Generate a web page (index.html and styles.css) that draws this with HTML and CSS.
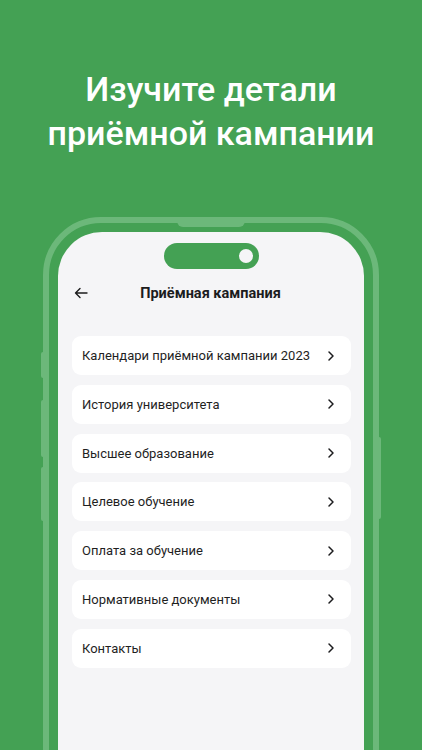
FILE: index.html
```html
<!DOCTYPE html>
<html lang="ru">
<head>
<meta charset="utf-8">
<title>Приёмная кампания</title>
<link rel="stylesheet" href="styles.css">
</head>
<body>
<div class="page">
  <h1 class="headline">Изучите детали<br>приёмной кампании</h1>
  <div class="phone">
    <span class="btn btn-l1"></span>
    <span class="btn btn-l2"></span>
    <span class="btn btn-l3"></span>
    <span class="btn btn-r1"></span>
    <span class="speaker"></span>
    <div class="screen">
      <div class="island"><span class="cam"></span></div>
      <div class="header">
        <svg class="back" width="14" height="12" viewBox="0 0 14 12"><path d="M13 6H1.5M6 1.5L1.5 6L6 10.5" fill="none" stroke="#1c1c1e" stroke-width="1.4" stroke-linecap="round" stroke-linejoin="round"/></svg>
        <div class="title">Приёмная кампания</div>
        <span class="spacer"></span>
      </div>
      <div class="list">
        <div class="item"><span>Календари приёмной кампании 2023</span><svg class="chev" width="8" height="12" viewBox="0 0 8 12"><path d="M2 2L6 6L2 10" fill="none" stroke="#1c1c1e" stroke-width="1.5" stroke-linecap="round" stroke-linejoin="round"/></svg></div>
        <div class="item"><span>История университета</span><svg class="chev" width="8" height="12" viewBox="0 0 8 12"><path d="M2 2L6 6L2 10" fill="none" stroke="#1c1c1e" stroke-width="1.5" stroke-linecap="round" stroke-linejoin="round"/></svg></div>
        <div class="item"><span>Высшее образование</span><svg class="chev" width="8" height="12" viewBox="0 0 8 12"><path d="M2 2L6 6L2 10" fill="none" stroke="#1c1c1e" stroke-width="1.5" stroke-linecap="round" stroke-linejoin="round"/></svg></div>
        <div class="item"><span>Целевое обучение</span><svg class="chev" width="8" height="12" viewBox="0 0 8 12"><path d="M2 2L6 6L2 10" fill="none" stroke="#1c1c1e" stroke-width="1.5" stroke-linecap="round" stroke-linejoin="round"/></svg></div>
        <div class="item"><span>Оплата за обучение</span><svg class="chev" width="8" height="12" viewBox="0 0 8 12"><path d="M2 2L6 6L2 10" fill="none" stroke="#1c1c1e" stroke-width="1.5" stroke-linecap="round" stroke-linejoin="round"/></svg></div>
        <div class="item"><span>Нормативные документы</span><svg class="chev" width="8" height="12" viewBox="0 0 8 12"><path d="M2 2L6 6L2 10" fill="none" stroke="#1c1c1e" stroke-width="1.5" stroke-linecap="round" stroke-linejoin="round"/></svg></div>
        <div class="item"><span>Контакты</span><svg class="chev" width="8" height="12" viewBox="0 0 8 12"><path d="M2 2L6 6L2 10" fill="none" stroke="#1c1c1e" stroke-width="1.5" stroke-linecap="round" stroke-linejoin="round"/></svg></div>
      </div>
    </div>
  </div>
</div>
</body>
</html>
```
FILE: styles.css
```css
* { box-sizing: border-box; }
html, body { margin: 0; padding: 0; }
body {
  background: #44a154;
  font-family: Roboto, "Noto Sans", sans-serif;
}
.page {
  width: 422px;
  height: 750px;
  overflow: hidden;
  padding-top: 67px;
}
.headline {
  margin: 0;
  color: #ffffff;
  font-size: 34px;
  font-weight: 500;
  line-height: 44px;
  text-align: center;
}
.phone {
  position: relative;
  width: 336px;
  height: 700px;
  margin: 62px auto 0;
  border: 6px solid #6cb87a;
  border-radius: 58px;
  padding: 9px;
}
.speaker {
  position: absolute;
  top: -5px;
  left: 128px;
  width: 68px;
  height: 9px;
  background: #6cb87a;
  border-radius: 0 0 6px 6px;
}
.btn {
  position: absolute;
  width: 3px;
  background: #6cb87a;
}
.btn-l1 { left: -8px; top: 129px; height: 26px; border-radius: 2px 0 0 2px; }
.btn-l2 { left: -8px; top: 177px; height: 57px; border-radius: 2px 0 0 2px; }
.btn-l3 { left: -8px; top: 244px; height: 54px; border-radius: 2px 0 0 2px; }
.btn-r1 { right: -8px; top: 214px; height: 82px; border-radius: 0 2px 2px 0; }
.screen {
  height: 100%;
  background: #f5f5f7;
  border-radius: 44px;
  padding-top: 11px;
}
.island {
  position: relative;
  width: 95px;
  height: 26px;
  margin: 0 auto;
  background: #44a154;
  border-radius: 13px;
}
.cam {
  position: absolute;
  right: 6px;
  top: 6px;
  width: 14px;
  height: 14px;
  border-radius: 50%;
  background: #f5f5f7;
}
.header {
  display: flex;
  align-items: center;
  justify-content: space-between;
  height: 26px;
  margin-top: 11px;
  padding: 0 17px 0 16px;
}
.back { display: block; }
.spacer { width: 14px; }
.title {
  font-size: 14.5px;
  font-weight: 700;
  color: #1c1c1e;
}
.list {
  display: flex;
  flex-direction: column;
  gap: 9.8px;
  padding: 30px 13px 0 14px;
}
.item {
  display: flex;
  align-items: center;
  justify-content: space-between;
  height: 39px;
  background: #ffffff;
  border-radius: 9px;
  padding: 0 16px 0 10px;
  font-size: 13px;
  color: #1f1f1f;
}
.chev { display: block; }
```
